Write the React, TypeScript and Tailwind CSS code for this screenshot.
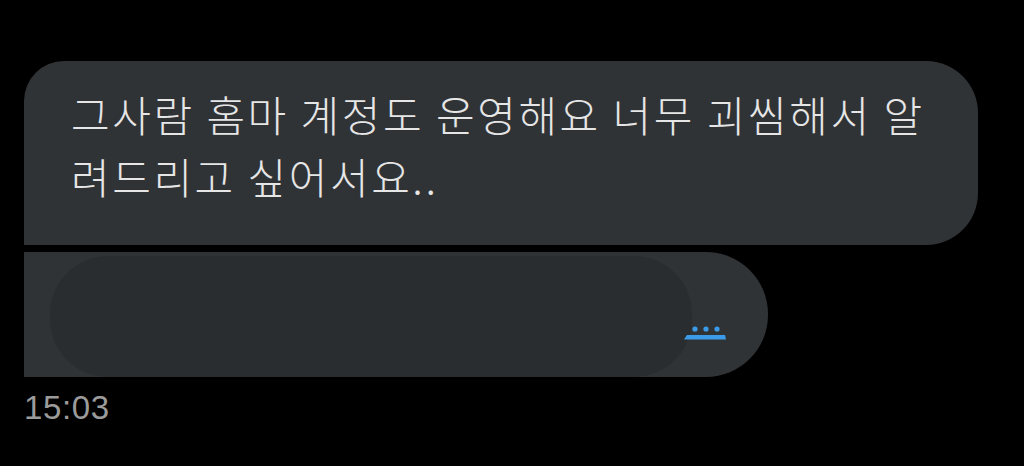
function TypingDots() {
  return (
    <svg width="44" height="20" viewBox="0 0 44 20" className="block">
      <circle cx="11" cy="5" r="2.6" fill="#3b9be8" />
      <circle cx="22" cy="5" r="2.6" fill="#3b9be8" />
      <circle cx="33" cy="5" r="2.6" fill="#3b9be8" />
      <polygon points="3,11 41,11 42,15.5 0,15.5" fill="#3b9be8" />
    </svg>
  );
}

export default function App() {
  return (
    <div className="w-[1024px] h-[466px] bg-black overflow-hidden pl-[24px] pt-[61px]">
      <div
        className="w-[954px] h-[184px] bg-[#303336] rounded-tl-[40px] rounded-r-[52px] pl-[47px] pt-[22px] text-[#e6e6e6] text-[42px] leading-[62px] tracking-[2.55px] font-light"
        style={{ fontFamily: '"Noto Sans CJK KR", "Noto Sans", sans-serif' }}
      >
        <p>그사람 홈마 계정도 운영해요 너무 괴씸해서 알</p>
        <p>려드리고 싶어서요..</p>
      </div>

      <div className="mt-[7px] w-[744px] h-[125px] bg-[#303336] rounded-r-[62px] flex">
        <div className="ml-[26px] mt-[4px] w-[642px] bg-[#2a2d30] rounded-[58px]" />
        <div className="ml-[-8px] pb-[33px] flex items-end">
          <TypingDots />
        </div>
      </div>

      <p
        className="mt-[13px] text-[33px] leading-[36px] tracking-[0.6px] text-[#9b9b9b]"
        style={{ fontFamily: '"Liberation Sans", Arial, sans-serif' }}
      >
        15:03
      </p>
    </div>
  );
}
